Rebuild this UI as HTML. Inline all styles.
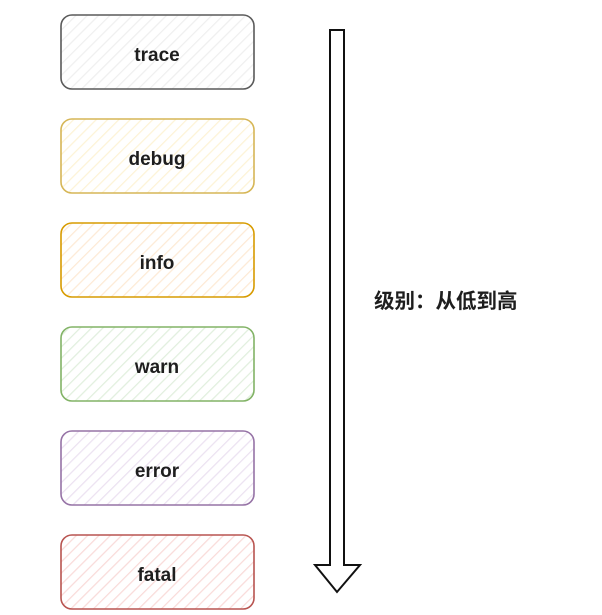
<!DOCTYPE html>
<html><head><meta charset="utf-8"><style>
html,body{margin:0;padding:0;background:#fff;width:602px;height:615px;overflow:hidden}
svg{display:block}
text{font-family:"Comic Sans MS","Liberation Sans",sans-serif;font-weight:bold;font-size:19px;fill:#1e1e1e}
</style></head><body>
<svg width="602" height="615" viewBox="0 0 602 615">
<defs>
<pattern id="h0" width="8" height="8" patternUnits="userSpaceOnUse" patternTransform="rotate(45)"><rect width="8" height="8" fill="#fff"/><line x1="0" y1="0" x2="0" y2="8" stroke="#efefef" stroke-width="2.5"/></pattern>
<pattern id="h1" width="8" height="8" patternUnits="userSpaceOnUse" patternTransform="rotate(45)"><rect width="8" height="8" fill="#fff"/><line x1="0" y1="0" x2="0" y2="8" stroke="#fdf3d6" stroke-width="2.5"/></pattern>
<pattern id="h2" width="8" height="8" patternUnits="userSpaceOnUse" patternTransform="rotate(45)"><rect width="8" height="8" fill="#fff"/><line x1="0" y1="0" x2="0" y2="8" stroke="#fdead5" stroke-width="2.5"/></pattern>
<pattern id="h3" width="8" height="8" patternUnits="userSpaceOnUse" patternTransform="rotate(45)"><rect width="8" height="8" fill="#fff"/><line x1="0" y1="0" x2="0" y2="8" stroke="#e1efde" stroke-width="2.5"/></pattern>
<pattern id="h4" width="8" height="8" patternUnits="userSpaceOnUse" patternTransform="rotate(45)"><rect width="8" height="8" fill="#fff"/><line x1="0" y1="0" x2="0" y2="8" stroke="#ece2f1" stroke-width="2.5"/></pattern>
<pattern id="h5" width="8" height="8" patternUnits="userSpaceOnUse" patternTransform="rotate(45)"><rect width="8" height="8" fill="#fff"/><line x1="0" y1="0" x2="0" y2="8" stroke="#f9dbd9" stroke-width="2.5"/></pattern>
</defs>
<g stroke-width="1.6">
<rect x="61" y="15" width="193" height="74" rx="11" fill="url(#h0)" stroke="#5a5a5a"/>
<rect x="61" y="119" width="193" height="74" rx="11" fill="url(#h1)" stroke="#d6b656"/>
<rect x="61" y="223" width="193" height="74" rx="11" fill="url(#h2)" stroke="#d79b00"/>
<rect x="61" y="327" width="193" height="74" rx="11" fill="url(#h3)" stroke="#82b366"/>
<rect x="61" y="431" width="193" height="74" rx="11" fill="url(#h4)" stroke="#9673a6"/>
<rect x="61" y="535" width="193" height="74" rx="11" fill="url(#h5)" stroke="#b85450"/>
</g>
<g text-anchor="middle">
<text x="157" y="61">trace</text>
<text x="157" y="165">debug</text>
<text x="157" y="269">info</text>
<text x="157" y="373">warn</text>
<text x="157" y="477">error</text>
<text x="157" y="581">fatal</text>
</g>
<path d="M330 30 L344 30 L344 565 L360 565 L337 592 L315 565 L330 565 Z" fill="#fff" stroke="#111" stroke-width="2" stroke-linejoin="miter"/>
<text x="374" y="308" style="font-family:'Noto Sans CJK SC',sans-serif;font-size:20.5px;font-weight:bold">级别：从低到高</text>
</svg>
</body></html>
